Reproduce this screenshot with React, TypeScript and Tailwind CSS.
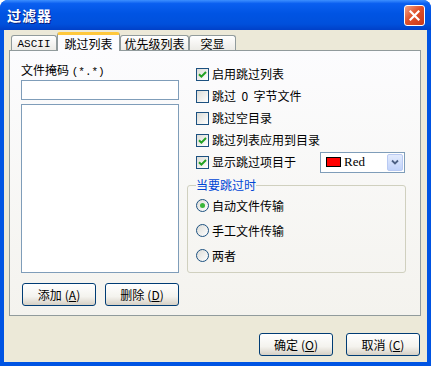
const cjk = "font-['SimSun','Noto_Sans_CJK_SC',sans-serif]"

const Check = ({ checked }: { checked: boolean }) => (
    <span className="w-[13px] h-[13px] border border-[#1c5180] bg-gradient-to-br from-[#dcdcd7] to-white flex items-center justify-center shrink-0">
        {checked && (
            <svg width="9" height="9" viewBox="0 0 9 9">
                <path d="M1 4.2 L3.4 6.6 L8 2" stroke="#21a121" strokeWidth="2" fill="none" />
            </svg>
        )}
    </span>
)

const Radio = ({ on }: { on: boolean }) => (
    <span className="w-[13px] h-[13px] rounded-full border border-[#1c5180] bg-gradient-to-br from-[#dcdcd7] to-white flex items-center justify-center shrink-0">
        {on && <span className="w-[5px] h-[5px] rounded-full bg-[#3ab63a]" />}
    </span>
)

const Btn = ({ label, hot }: { label: string, hot: string }) => (
    <button className="w-[74px] h-[23px] rounded-[3px] border border-[#003c74] bg-[linear-gradient(#ffffff,#f4f3ee_60%,#d6d0c5)] text-[12px] text-black flex items-center justify-center">
        {label}<span className="ml-[3px]">(<span className="underline">{hot}</span>)</span>
    </button>
)

const Tab = ({ label, w, active, mono }: { label: string, w: string, active?: boolean, mono?: boolean }) => (
    <div
        className={
            active
                ? "relative z-10 -mb-px h-[19px] flex items-center justify-center bg-[#fcfcfe] border-x border-[#919b9c] border-t-[3px] border-t-[#ffc83c] rounded-t-[3px] text-[12px] pt-[1px] " + w
                : "h-[15px] flex items-center justify-center bg-[linear-gradient(#ffffff,#ecebe6)] border-x border-t border-[#919b9c] rounded-t-[3px] text-[12px] pt-[2px] " + w
        }
    >
        <span className={mono ? "font-['Liberation_Mono',monospace] text-[11px]" : ""}>{label}</span>
    </div>
)

export default function App() {
    const checks: [string, boolean][] = [
        ["启用跳过列表", true],
        ["跳过\u00a0\u00a00\u00a0\u00a0字节文件", false],
        ["跳过空目录", false],
        ["跳过列表应用到目录", true],
    ]
    return (
        <div className={"w-[431px] h-[366px] rounded-t-[8px] bg-[#0054e3] flex flex-col text-black " + cjk}>
            <div className="h-[30px] shrink-0 rounded-t-[8px] bg-[linear-gradient(#3d8fff,#0a5ff0_12%,#0054e3_45%,#0050dc_80%,#0040c8)] flex items-center justify-between pl-[7px] pr-[6px]">
                <span className="text-white font-bold text-[14px] tracking-[1px] [text-shadow:1px_1px_0_#0a1e80]">过滤器</span>
                <div className="w-[21px] h-[21px] rounded-[3px] border border-white bg-[linear-gradient(135deg,#f0a58a,#e0512a_45%,#c8381a)] flex items-center justify-center">
                    <svg width="11" height="11" viewBox="0 0 11 11">
                        <path d="M1.5 1.5 L9.5 9.5 M9.5 1.5 L1.5 9.5" stroke="white" strokeWidth="2.2" strokeLinecap="square" />
                    </svg>
                </div>
            </div>
            <div className="flex-1 mx-[4px] mb-[4px] bg-[#ece9d8] flex flex-col pt-[2px]">
                <div className="h-[18px] flex items-end pl-[7px]">
                    <Tab label="ASCII" w="w-[46px]" mono />
                    <Tab label="跳过列表" w="w-[63px]" active />
                    <Tab label="优先级列表" w="w-[69px]" />
                    <Tab label="突显" w="w-[47px]" />
                </div>
                <div className="ml-[5px] w-[412px] h-[266px] border border-[#919b9c] bg-[linear-gradient(#fcfcfe,#f4f3ee)] grid grid-cols-[158px_219px] gap-x-[8px] pl-[11px]">
                    <div className="flex flex-col pt-[11px]">
                        <div className="h-[16px] text-[12px] leading-[16px]">
                            文件掩码 <span className="font-['Liberation_Mono',monospace] text-[11px]">(*.*)</span>
                        </div>
                        <div className="mt-[2px] h-[20px] border border-[#7f9db9] bg-white" />
                        <div className="mt-[4px] h-[169px] border border-[#7f9db9] bg-white" />
                        <div className="mt-[10px] flex gap-[9px] pl-[1px]">
                            <Btn label="添加" hot="A" />
                            <Btn label="删除" hot="D" />
                        </div>
                    </div>
                    <div className="flex flex-col pt-[12px]">
                        {checks.map(([t, c]) => (
                            <div key={t} className="h-[22px] flex items-center gap-[3px] pl-[9px] text-[12px]">
                                <Check checked={c} />
                                <span>{t}</span>
                            </div>
                        ))}
                        <div className="h-[22px] flex items-center gap-[3px] pl-[9px] text-[12px]">
                            <Check checked />
                            <span>显示跳过项目于</span>
                            <div className="ml-auto mr-[1px] w-[85px] h-[21px] border border-[#7f9db9] bg-white flex items-center pl-[5px] pr-[1px]">
                                <span className="w-[15px] h-[10px] bg-[#ff0000] border border-black" />
                                <span className="ml-[3px] font-['Liberation_Serif',serif] text-[13px]">Red</span>
                                <span className="ml-auto w-[16px] h-[17px] rounded-[2px] border border-[#b9caf3] bg-[linear-gradient(#e3ebfd,#c1d3fb)] flex items-center justify-center">
                                    <svg width="8" height="6" viewBox="0 0 8 6">
                                        <path d="M1 1.5 L4 4.5 L7 1.5" stroke="#4d6185" strokeWidth="1.8" fill="none" />
                                    </svg>
                                </span>
                            </div>
                        </div>
                        <fieldset className="mt-[5px] h-[95px] border border-[#d0d0bf] rounded-[3px] pl-[8px] pt-[1px]">
                            <legend className="px-[0px] text-[12px] leading-[14px] text-[#0046d5]">当要跳过时</legend>
                            {["自动文件传输", "手工文件传输", "两者"].map((t, i) => (
                                <div key={t} className="h-[25px] flex items-center gap-[3px] text-[12px]">
                                    <Radio on={i === 0} />
                                    <span>{t}</span>
                                </div>
                            ))}
                        </fieldset>
                    </div>
                </div>
                <div className="mt-[17px] flex justify-end gap-[13px] pr-[7px]">
                    <Btn label="确定" hot="O" />
                    <Btn label="取消" hot="C" />
                </div>
            </div>
        </div>
    )
}
